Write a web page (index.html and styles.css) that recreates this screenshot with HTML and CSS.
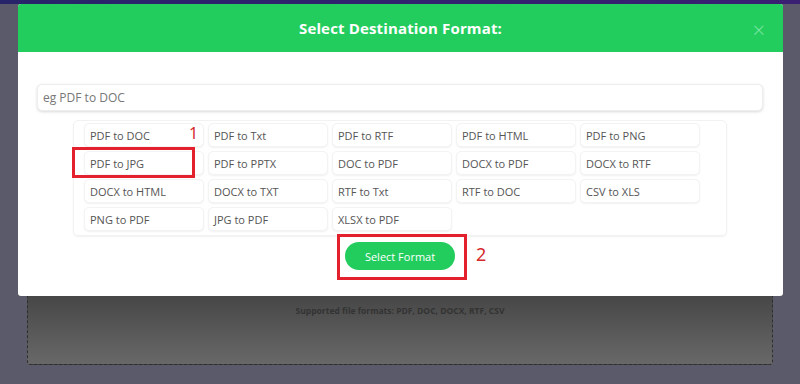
FILE: index.html
```html
<!DOCTYPE html>
<html lang="en">
<head>
    <meta charset="UTF-8">
    <meta name="viewport" content="width=device-width, initial-scale=1.0">
    <title>Select Destination Format</title>
    <link rel="stylesheet" href="styles.css">
</head>
<body>
    <div id="topbar"></div>

    <div id="page">
        <div id="dropzone">
            <p class="supported">Supported file formats: PDF, DOC, DOCX, RTF, CSV</p>
        </div>
    </div>

    <div id="overlay">
        <div id="modal">
            <div id="modal-header">
                <h3>Select Destination Format:</h3>
                <span class="close">&times;</span>
            </div>

            <div id="modal-body">
                <input type="text" id="search" placeholder="eg PDF to DOC">

                <div id="formats">
                    <button class="fmt">PDF to DOC</button>
                    <button class="fmt">PDF to Txt</button>
                    <button class="fmt">PDF to RTF</button>
                    <button class="fmt">PDF to HTML</button>
                    <button class="fmt">PDF to PNG</button>

                    <button class="fmt">PDF to JPG</button>
                    <button class="fmt">PDF to PPTX</button>
                    <button class="fmt">DOC to PDF</button>
                    <button class="fmt">DOCX to PDF</button>
                    <button class="fmt">DOCX to RTF</button>

                    <button class="fmt">DOCX to HTML</button>
                    <button class="fmt">DOCX to TXT</button>
                    <button class="fmt">RTF to Txt</button>
                    <button class="fmt">RTF to DOC</button>
                    <button class="fmt">CSV to XLS</button>

                    <button class="fmt">PNG to PDF</button>
                    <button class="fmt">JPG to PDF</button>
                    <button class="fmt">XLSX to PDF</button>
                </div>

                <div id="actions">
                    <button id="select-btn">Select Format</button>
                </div>
            </div>

            <!--annotation marks-->
            <div class="mark mark-1"></div>
            <span class="num num-1">1</span>
            <div class="mark mark-2"></div>
            <span class="num num-2">2</span>
        </div>
    </div>
</body>
</html>
```

FILE: styles.css
```css
*{
    margin: 0;
    padding: 0;
    box-sizing: border-box;
}

body{
    width: 800px;
    height: 384px;
    overflow: hidden;
    background-color: #5a5a6a;
    font-family: "Open Sans", "Liberation Sans", sans-serif;
}

#topbar{
    height: 4px;
    background: linear-gradient(90deg, #28246a, #3a1f72);
}

#page{
    padding: 0 27px;
}

#dropzone{
    margin-top: 196px;
    height: 165px;
    border: 1px dashed #2e2e2e;
    border-radius: 4px;
    background: linear-gradient(180deg, #404040 50%, #4a4a4a 62%, #686868 100%);
    text-align: center;
    padding-top: 104px;
}

.supported{
    font-size: 8.5px;
    font-weight: 700;
    color: #333;
}

#overlay{
    position: fixed;
    top: 0;
    left: 0;
    right: 0;
    bottom: 0;
}

#modal{
    position: relative;
    margin: 4px 17px 0 18px;
    background-color: white;
    border-radius: 3px;
}

#modal-header{
    height: 48px;
    background-color: #22cd5e;
    border-radius: 3px 3px 0 0;
    display: flex;
    align-items: center;
    justify-content: center;
    position: relative;
}

#modal-header h3{
    color: white;
    font-size: 15px;
    font-weight: 700;
    letter-spacing: 0.15px;
}

.close{
    position: absolute;
    right: 18px;
    top: 14px;
    font-size: 22px;
    font-weight: 300;
    line-height: 1;
    color: #7fe6a4;
}

#modal-body{
    padding: 32px 20px 26px 19px;
}

#search{
    display: block;
    width: 100%;
    height: 27px;
    border: 1px solid #eee;
    border-radius: 5px;
    box-shadow: 0 1px 3px rgba(0,0,0,0.15);
    padding-left: 5px;
    font-family: inherit;
    font-size: 12px;
    outline: none;
}

#search::placeholder{
    color: #777;
}

#formats{
    width: 654px;
    margin: 9px 0 0 36px;
    padding: 2px 28px 4px 10px;
    border: 1px solid #f2f2f2;
    border-radius: 5px;
    box-shadow: 0 1px 2px rgba(0,0,0,0.06);
    display: grid;
    grid-template-columns: repeat(5, 120px);
    column-gap: 4px;
    row-gap: 4px;
}

.fmt{
    height: 24px;
    border: 1px solid #f3f3f3;
    border-radius: 5px;
    background-color: white;
    box-shadow: 0 1px 2px rgba(0,0,0,0.06);
    text-align: left;
    padding-left: 5px;
    font-family: inherit;
    font-size: 11px;
    color: #555;
}

#actions{
    margin-top: 6px;
    text-align: center;
}

#select-btn{
    width: 110px;
    height: 28px;
    border: none;
    border-radius: 14px;
    background-color: #22cd5e;
    color: white;
    font-family: inherit;
    font-size: 11px;
}

.mark{
    position: absolute;
    border: 3px solid #e3202b;
}

.mark-1{
    left: 54px;
    top: 143px;
    width: 123px;
    height: 31px;
}

.mark-2{
    left: 319px;
    top: 230px;
    width: 130px;
    height: 46px;
}

.num{
    position: absolute;
    color: #d42a2a;
    font-family: "Noto Sans", sans-serif;
    line-height: 1;
}

.num-1{
    left: 171px;
    top: 121px;
    font-size: 16px;
}

.num-2{
    left: 458px;
    top: 241px;
    font-size: 18px;
}
```
